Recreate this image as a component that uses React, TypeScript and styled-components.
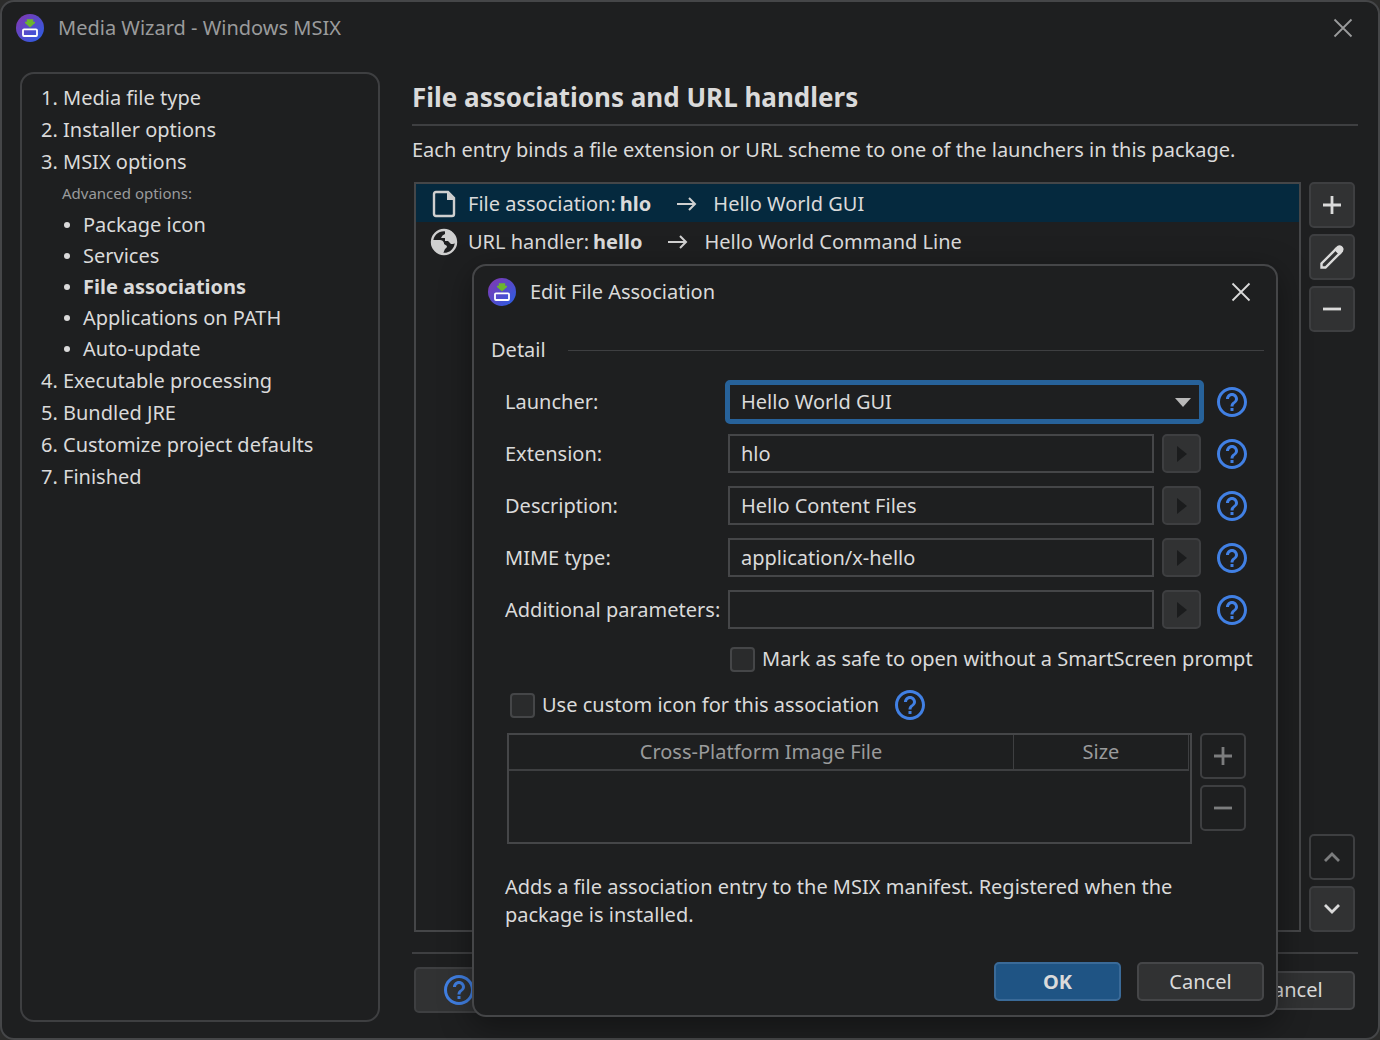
import React, { useState } from "react";
import styled, { createGlobalStyle, css } from "styled-components";
import { MdHelpOutline } from "react-icons/md";

const c = {
  desk: "#2c2c2b",
  bg: "#1e1f20",
  border: "#454648",
  line: "#3e3f41",
  text: "#dadada",
  dim: "#9a9b9c",
  button: "#313233",
  selected: "#05293e",
  blue: "#4180e4",
  focus: "#27629a",
};

const GlobalStyle = createGlobalStyle`
  *, *::before, *::after { box-sizing: border-box; }
  body {
    margin: 0;
    background: ${c.desk};
    color: ${c.text};
    font-family: "Noto Sans", "Open Sans", sans-serif;
    font-size: 20px;
    line-height: 28px;
  }
  button, input, select { font: inherit; color: inherit; margin: 0; }
  h1, h2, p, ol, ul { margin: 0; padding: 0; }
  ol, ul { list-style: none; }
`;

const Window = styled.div`
  position: relative;
  display: flex;
  flex-direction: column;
  min-height: 100vh;
  border: 2px solid ${c.border};
  border-radius: 14px;
  background: ${c.bg};
`;

const TitleBar = styled.header<{ $dim?: boolean }>`
  display: flex;
  align-items: center;
  height: 52px;
  padding: 0 14px;
  color: ${(p) => (p.$dim ? c.dim : c.text)};
`;

const Title = styled.h2`
  flex: 1;
  margin-left: 14px;
  font-size: 20px;
  font-weight: 400;
`;

const CloseButton = styled.button`
  display: grid;
  place-items: center;
  width: 42px;
  height: 42px;
  padding: 0;
  border: 0;
  background: none;
`;

const Body = styled.div`
  flex: 1;
  display: flex;
  gap: 32px;
  padding: 18px 20px 16px 18px;
`;

const Sidebar = styled.nav`
  flex: 0 0 360px;
  padding: 8px 19px;
  border: 2px solid ${c.line};
  border-radius: 14px;
`;

const Step = styled.li`
  line-height: 32px;
`;

const StepNote = styled.p`
  padding-left: 21px;
  font-size: 15px;
  line-height: 31px;
  color: ${c.dim};
`;

const SubSteps = styled.ul`
  && { padding-bottom: 1px; }
`;

const SubStep = styled.li<{ $current?: boolean }>`
  display: flex;
  align-items: center;
  gap: 13px;
  padding-left: 23px;
  line-height: 31px;
  font-weight: ${(p) => (p.$current ? 700 : 400)};

  &::before {
    content: "";
    width: 6px;
    height: 6px;
    border-radius: 50%;
    background: ${c.text};
  }
`;

const Main = styled.main`
  flex: 1;
  min-width: 0;
  display: flex;
  flex-direction: column;
`;

const Heading = styled.h1`
  && { padding: 9px 0 11px; }
  border-bottom: 2px solid ${c.line};
  font-size: 26px;
  line-height: 32px;
  font-weight: 700;
`;

const Intro = styled.p`
  && { padding: 10px 0 18px; }
`;

const ListArea = styled.div`
  flex: 1;
  display: flex;
  gap: 8px;
  padding: 0 3px 20px 2px;
`;

const EntryList = styled.ul`
  flex: 1;
  border: 2px solid ${c.border};
`;

const Entry = styled.li<{ $selected?: boolean }>`
  display: flex;
  align-items: center;
  height: 38px;
  padding: 1px 0 0 13px;
  background: ${(p) => (p.$selected ? c.selected : "transparent")};

  > svg:first-child { margin-right: 9px; }
  b { margin-left: 4px; }
`;

const ArrowIcon = styled.svg`
  margin: 0 16px 0 26px;
`;

const Tools = styled.div`
  display: flex;
  flex-direction: column;
  gap: 6px;
`;

const ToolButton = styled.button`
  display: grid;
  place-items: center;
  width: 46px;
  height: 46px;
  padding: 0;
  border: 2px solid ${c.line};
  border-radius: 5px;
  background: ${c.button};

  &:disabled { background: none; color: #7c7d7e; }
`;

const Spacer = styled.div`
  flex: 1;
`;

const Footer = styled.footer`
  display: flex;
  align-items: center;
  justify-content: space-between;
  padding: 13px 3px 9px 2px;
  border-top: 2px solid ${c.line};
`;

const PushButton = styled.button<{ $primary?: boolean }>`
  width: 127px;
  height: 39px;
  padding: 0;
  border: 2px solid ${c.border};
  border-radius: 5px;
  background: ${c.button};
  ${(p) =>
    p.$primary &&
    css`
      border-color: #3a6a98;
      background: #1f5484;
      font-weight: 700;
    `}
`;

const WideHelp = styled.button`
  display: grid;
  place-items: center;
  width: 90px;
  height: 46px;
  padding: 0;
  border: 2px solid ${c.line};
  border-radius: 5px;
  background: ${c.button};
  color: ${c.blue};
`;

const Dialog = styled.section`
  position: absolute;
  top: 262px;
  right: 100px;
  width: 806px;
  border: 2px solid ${c.border};
  border-radius: 14px;
  background: ${c.bg};
  box-shadow: 0 8px 32px rgba(0, 0, 0, 0.4);
`;

const DialogBody = styled.form`
  padding: 18px 12px 14px 17px;
`;

const SectionTitle = styled.div`
  display: flex;
  align-items: center;
  gap: 22px;

  &::after {
    content: "";
    flex: 1;
    height: 1px;
    background: ${c.line};
  }
`;

const Fields = styled.div`
  display: flex;
  flex-direction: column;
  gap: 13px;
  padding: 18px 17px 0 14px;
`;

const Field = styled.div`
  display: flex;
  align-items: center;
  height: 39px;
`;

const FieldLabel = styled.label`
  flex: 0 0 223px;
  white-space: nowrap;
`;

const TextInput = styled.input`
  flex: 1;
  min-width: 0;
  height: 39px;
  margin-right: 8px;
  padding: 0 11px;
  border: 2px solid ${c.border};
  background: ${c.bg};
  outline: none;
`;

const SelectWrap = styled.div`
  position: relative;
  flex: 1;
  margin: 0 -3px;

  svg {
    position: absolute;
    right: 13px;
    top: 18px;
    pointer-events: none;
  }
`;

const Select = styled.select`
  display: block;
  width: 100%;
  height: 44px;
  padding: 0 11px;
  border: 5px solid ${c.focus};
  border-radius: 5px;
  background: ${c.bg};
  outline: none;
  appearance: none;
`;

const VariableButton = styled.button`
  display: grid;
  place-items: center;
  width: 39px;
  height: 39px;
  padding: 0;
  border: 2px solid ${c.line};
  border-radius: 5px;
  background: ${c.button};
`;

const HelpButton = styled.button`
  display: grid;
  place-items: center;
  width: 36px;
  height: 36px;
  margin-left: 13px;
  margin-right: -3px;
  padding: 0;
  border: 0;
  background: none;
  color: ${c.blue};
`;

const Check = styled.label<{ $indent?: boolean }>`
  display: flex;
  align-items: center;
  gap: 7px;
  padding: ${(p) => (p.$indent ? "3px 0 0 225px" : "0")};
  white-space: nowrap;
`;

const CheckRow = styled.div`
  display: flex;
  align-items: center;
  height: 36px;
  margin-top: 14px;
  padding-left: 19px;
`;

const CheckBox = styled.input`
  appearance: none;
  flex: none;
  width: 25px;
  height: 25px;
  border: 2px solid ${c.border};
  border-radius: 4px;
  background: #2a2b2c;
`;

const ImageArea = styled.div`
  display: flex;
  gap: 8px;
  padding: 10px 18px 0 16px;
`;

const TableFrame = styled.div`
  flex: 1;
  height: 111px;
  padding-right: 1px;
  border: 2px solid ${c.border};
`;

const Table = styled.table`
  width: 100%;
  border-collapse: collapse;
  table-layout: fixed;
  color: ${c.dim};

  th {
    height: 35px;
    padding: 0;
    border-right: 1px solid ${c.line};
    border-bottom: 2px solid ${c.line};
    font-weight: 400;
  }
  th:last-child { width: 175px; }
`;

const Note = styled.p`
  max-width: 720px;
  && { padding: 29px 14px 0; }
`;

const Actions = styled.div`
  display: flex;
  justify-content: flex-end;
  gap: 16px;
  margin-top: 33px;
`;

function AppLogo({ id }: { id: string }) {
  return (
    <svg width="28" height="28" viewBox="0 0 28 28" aria-hidden="true">
      <defs>
        <linearGradient id={id} x1="0" y1="0" x2="1" y2="1">
          <stop offset="0.1" stopColor="#7c3ab4" />
          <stop offset="0.9" stopColor="#2f5be0" />
        </linearGradient>
      </defs>
      <circle cx="14" cy="14" r="14" fill={`url(#${id})`} />
      <path d="M10.800 5.200h6.400v2.600h1.800v1.200l-5 4.600-5-4.600V7.800h1.800z" fill="#6cb52d" />
      <rect x="7" y="15.300" width="14" height="6.700" rx="1" fill="none" stroke="#fff" strokeWidth="1.8" />
    </svg>
  );
}

const CloseGlyph = () => (
  <svg width="20" height="20" viewBox="0 0 20 20" fill="none" stroke="currentColor" strokeWidth="1.8">
    <path d="M1.500 1.500l17 17M18.500 1.500l-17 17" />
  </svg>
);

const FileIcon = () => (
  <svg width="30" height="30" viewBox="0 0 30 30" aria-hidden="true">
    <path d="M7 3h12l6 6v16q0 2-2 2H7q-2 0-2-2V5q0-2 2-2z" fill="none" stroke="#cfcfcf" strokeWidth="2.4" />
    <path d="M18 3l8 8h-8z" fill="#cfcfcf" />
  </svg>
);

const GlobeIcon = () => (
  <svg width="30" height="30" viewBox="0 0 30 30" aria-hidden="true">
    <circle cx="15" cy="15" r="12" fill="none" stroke="#cfcfcf" strokeWidth="2.4" />
    <path d="M16 3v4q-3 1-4 4h4v3h3l3 3 2 0 3-1 0-5-5-7z" fill="#cfcfcf" />
    <path d="M3 13h8q3 0 4 3v1l3 2q0 2-2 3-1 2-2 5l-5-1-5-5z" fill="#cfcfcf" />
  </svg>
);

const Arrow = () => (
  <ArrowIcon width="20" height="14" viewBox="0 0 20 14" fill="none" stroke="#d0d0d0" strokeWidth="2" aria-hidden="true">
    <path d="M0 7h18M12 1l6 6-6 6" />
  </ArrowIcon>
);

const Plus = () => (
  <svg width="20" height="20" viewBox="0 0 20 20" stroke="currentColor" strokeWidth="2.8">
    <path d="M1 10h18M10 1v18" />
  </svg>
);

const Minus = () => (
  <svg width="20" height="20" viewBox="0 0 20 20" stroke="currentColor" strokeWidth="2.8">
    <path d="M1 10h18" />
  </svg>
);

const Pencil = () => (
  <svg width="26" height="26" viewBox="0 0 26 26" fill="none" stroke="currentColor" strokeWidth="2.4">
    <path d="M2.500 23.500v-4L17 5l4 4L6.500 23.500z" />
    <path d="M16.500 5.500l2.500-2.500q1.500-1.200 3 0l1 1q1.200 1.500 0 3l-2.500 2.500z" fill="currentColor" />
  </svg>
);

const Chevron = ({ up }: { up?: boolean }) => (
  <svg width="16" height="12" viewBox="0 0 16 12" fill="none" stroke="currentColor" strokeWidth="2.8">
    <path d={up ? "M1 10l7-7 7 7" : "M1 2l7 7 7-7"} />
  </svg>
);

const Help = () => (
  <HelpButton type="button" aria-label="Help">
    <MdHelpOutline size={36} />
  </HelpButton>
);

const steps = ["Media file type", "Installer options", "MSIX options"];
const subSteps = ["Package icon", "Services", "File associations", "Applications on PATH", "Auto-update"];
const lastSteps = ["Executable processing", "Bundled JRE", "Customize project defaults", "Finished"];

const entries = [
  { kind: "File association:", key: "hlo", target: "Hello World GUI", Icon: FileIcon },
  { kind: "URL handler:", key: "hello", target: "Hello World Command Line", Icon: GlobeIcon },
];

const inputs = [
  { id: "extension", label: "Extension:", value: "hlo" },
  { id: "description", label: "Description:", value: "Hello Content Files" },
  { id: "mime", label: "MIME type:", value: "application/x-hello" },
  { id: "params", label: "Additional parameters:", value: "" },
];

function EditDialog() {
  const [launcher, setLauncher] = useState("Hello World GUI");
  return (
    <Dialog role="dialog" aria-labelledby="dialog-title">
      <TitleBar>
        <AppLogo id="logo-dialog" />
        <Title id="dialog-title">Edit File Association</Title>
        <CloseButton type="button" aria-label="Close dialog">
          <CloseGlyph />
        </CloseButton>
      </TitleBar>
      <DialogBody onSubmit={(e) => e.preventDefault()}>
        <SectionTitle>Detail</SectionTitle>
        <Fields>
          <Field>
            <FieldLabel htmlFor="launcher">Launcher:</FieldLabel>
            <SelectWrap>
              <Select id="launcher" value={launcher} onChange={(e) => setLauncher(e.target.value)}>
                <option>Hello World GUI</option>
                <option>Hello World Command Line</option>
              </Select>
              <svg width="16" height="9" viewBox="0 0 16 9" aria-hidden="true">
                <path d="M0 0h16L8 9z" fill="#b9b9b9" />
              </svg>
            </SelectWrap>
            <Help />
          </Field>
          {inputs.map((f) => (
            <Field key={f.id}>
              <FieldLabel htmlFor={f.id}>{f.label}</FieldLabel>
              <TextInput id={f.id} type="text" defaultValue={f.value} />
              <VariableButton type="button" aria-label="Insert variable" disabled>
                <svg width="10" height="16" viewBox="0 0 10 16">
                  <path d="M0 0l10 8-10 8z" fill="#1b1c1d" />
                </svg>
              </VariableButton>
              <Help />
            </Field>
          ))}
          <Check $indent>
            <CheckBox type="checkbox" />
            Mark as safe to open without a SmartScreen prompt
          </Check>
        </Fields>
        <CheckRow>
          <Check>
            <CheckBox type="checkbox" />
            Use custom icon for this association
          </Check>
          <Help />
        </CheckRow>
        <ImageArea>
          <TableFrame>
            <Table>
              <thead>
                <tr>
                  <th scope="col">Cross-Platform Image File</th>
                  <th scope="col">Size</th>
                </tr>
              </thead>
            </Table>
          </TableFrame>
          <Tools>
            <ToolButton type="button" aria-label="Add image" disabled>
              <Plus />
            </ToolButton>
            <ToolButton type="button" aria-label="Remove image" disabled>
              <Minus />
            </ToolButton>
          </Tools>
        </ImageArea>
        <Note>Adds a file association entry to the MSIX manifest. Registered when the package is installed.</Note>
        <Actions>
          <PushButton type="submit" $primary>
            OK
          </PushButton>
          <PushButton type="button">Cancel</PushButton>
        </Actions>
      </DialogBody>
    </Dialog>
  );
}

export default function App() {
  return (
    <>
      <GlobalStyle />
      <Window>
        <TitleBar $dim>
          <AppLogo id="logo-main" />
          <Title>Media Wizard - Windows MSIX</Title>
          <CloseButton type="button" aria-label="Close">
            <CloseGlyph />
          </CloseButton>
        </TitleBar>
        <Body>
          <Sidebar aria-label="Wizard steps">
            <ol>
              {steps.map((s, i) => (
                <Step key={s}>{`${i + 1}. ${s}`}</Step>
              ))}
              <li>
                <StepNote>Advanced options:</StepNote>
                <SubSteps>
                  {subSteps.map((s) => (
                    <SubStep key={s} $current={s === "File associations"}>
                      {s}
                    </SubStep>
                  ))}
                </SubSteps>
              </li>
              {lastSteps.map((s, i) => (
                <Step key={s}>{`${i + 4}. ${s}`}</Step>
              ))}
            </ol>
          </Sidebar>
          <Main>
            <Heading>File associations and URL handlers</Heading>
            <Intro>Each entry binds a file extension or URL scheme to one of the launchers in this package.</Intro>
            <ListArea>
              <EntryList>
                {entries.map(({ kind, key, target, Icon }, i) => (
                  <Entry key={key} $selected={i === 0}>
                    <Icon />
                    <span>{kind}</span>
                    <b>{key}</b>
                    <Arrow />
                    <span>{target}</span>
                  </Entry>
                ))}
              </EntryList>
              <Tools>
                <ToolButton type="button" aria-label="Add entry">
                  <Plus />
                </ToolButton>
                <ToolButton type="button" aria-label="Edit entry">
                  <Pencil />
                </ToolButton>
                <ToolButton type="button" aria-label="Remove entry">
                  <Minus />
                </ToolButton>
                <Spacer />
                <ToolButton type="button" aria-label="Move up" disabled>
                  <Chevron up />
                </ToolButton>
                <ToolButton type="button" aria-label="Move down">
                  <Chevron />
                </ToolButton>
              </Tools>
            </ListArea>
            <Footer>
              <WideHelp type="button" aria-label="Help">
                <MdHelpOutline size={36} />
              </WideHelp>
              <PushButton type="button">Cancel</PushButton>
            </Footer>
          </Main>
        </Body>
        <EditDialog />
      </Window>
    </>
  );
}
